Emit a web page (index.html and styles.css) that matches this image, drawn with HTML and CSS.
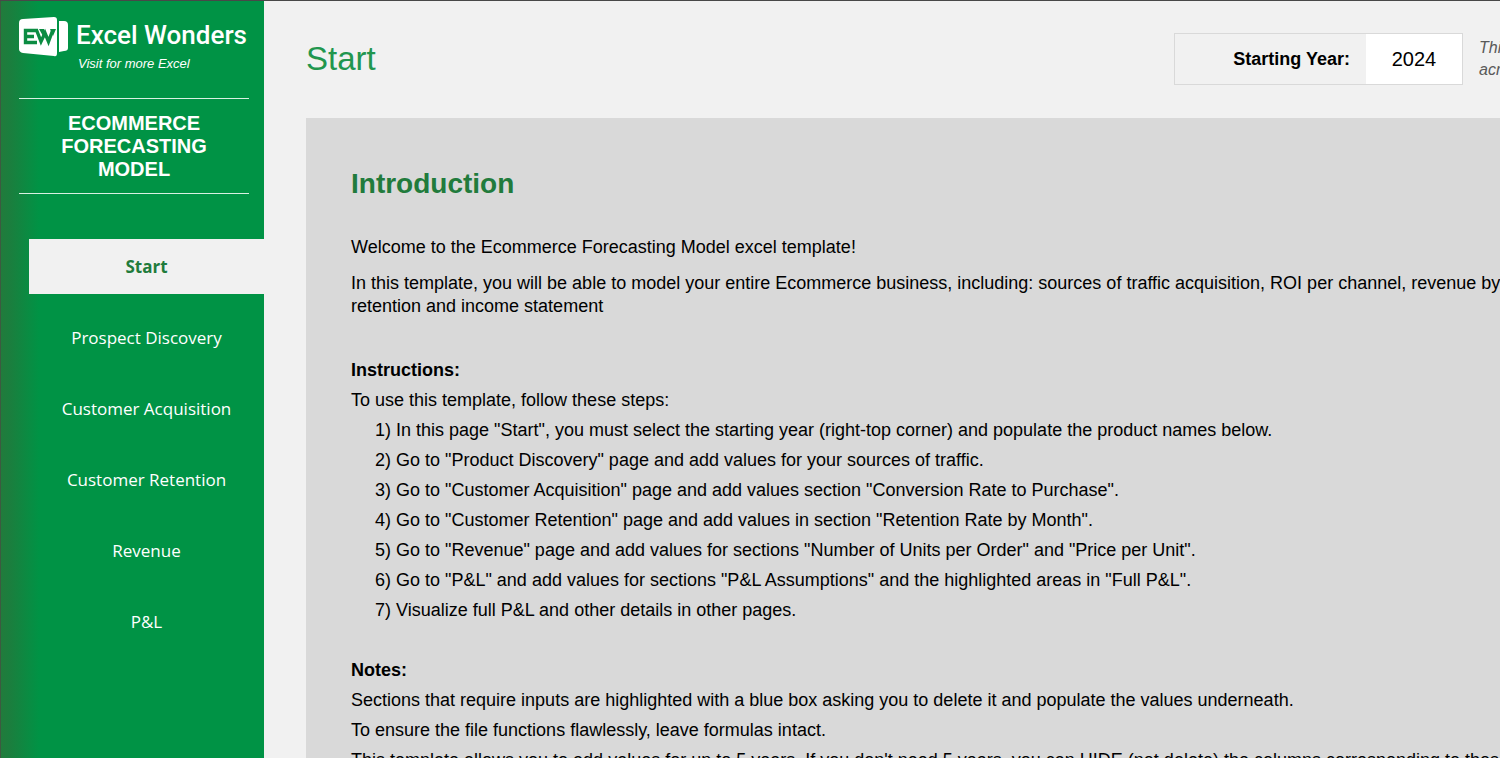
FILE: index.html
```html
<!DOCTYPE html>
<html lang="en">
<head>
    <meta charset="UTF-8">
    <meta name="viewport" content="width=device-width, initial-scale=1.0">
    <title>Ecommerce Forecasting Model - Excel Wonders</title>
    <link rel="stylesheet" href="styles.css">
</head>
<body>
    <div class="workbook">
        <aside class="sidebar">
            <a href="#" class="brand">
                <svg class="brand-logo" viewBox="0 0 50 42" aria-hidden="true">
                    <path fill="#fff" d="M4 3 35 1Q38 1 38 4V37Q38 41 35 40L4 37Q0 36 0 33V7Q0 3 4 3Z"/>
                    <path fill="#fff" d="M40 5H45Q49 5 49 9V32Q49 35 45 35L40 36Z"/>
                    <path fill="none" stroke="#0b8c42" stroke-width="3.4" d="M19 14.5H6.5V26.5H18M7 20.5H15M17.5 14 22 25.500 26 17 29.500 25.500 34 13.500"/>
                    <path fill="#0b8c42" d="M20 13H25L27 18 24 20ZM31 13H37L34 20Z"/>
                </svg>
                <span class="brand-text">
                    <span class="brand-name">Excel Wonders</span>
                    <span class="brand-tagline">Visit for more Excel</span>
                </span>
            </a>
            <h2 class="model-title">ECOMMERCE FORECASTING MODEL</h2>
            <nav class="menu">
                <a href="#start" class="menu-link active">Start</a>
                <a href="#prospect" class="menu-link">Prospect Discovery</a>
                <a href="#acquisition" class="menu-link">Customer Acquisition</a>
                <a href="#retention" class="menu-link">Customer Retention</a>
                <a href="#revenue" class="menu-link">Revenue</a>
                <a href="#pl" class="menu-link">P&amp;L</a>
            </nav>
        </aside>

        <main class="content" id="start">
            <header class="page-header">
                <h1>Start</h1>
                <div class="year-box">
                    <label for="starting-year">Starting Year:</label>
                    <input type="text" id="starting-year" value="2024">
                </div>
                <p class="year-note">This<br>across</p>
            </header>

            <section class="panel">
                <h2>Introduction</h2>
                <p class="welcome">Welcome to the Ecommerce Forecasting Model excel template!</p>
                <p class="summary">In this template, you will be able to model your entire Ecommerce business, including: sources of traffic acquisition, ROI per channel, revenue by<br>retention and income statement</p>

                <h3>Instructions:</h3>
                <p>To use this template, follow these steps:</p>
                <ol class="steps">
                    <li>In this page "Start", you must select the starting year (right-top corner) and populate the product names below.</li>
                    <li>Go to "Product Discovery" page and add values for your sources of traffic.</li>
                    <li>Go to "Customer Acquisition" page and add values section "Conversion Rate to Purchase".</li>
                    <li>Go to "Customer Retention" page and add values in section "Retention Rate by Month".</li>
                    <li>Go to "Revenue" page and add values for sections "Number of Units per Order" and "Price per Unit".</li>
                    <li>Go to "P&amp;L" and add values for sections "P&amp;L Assumptions" and the highlighted areas in "Full P&amp;L".</li>
                    <li>Visualize full P&amp;L and other details in other pages.</li>
                </ol>

                <h3>Notes:</h3>
                <p>Sections that require inputs are highlighted with a blue box asking you to delete it and populate the values underneath.</p>
                <p>To ensure the file functions flawlessly, leave formulas intact.</p>
                <p>This template allows you to add values for up to 5 years. If you don't need 5 years, you can HIDE (not delete) the columns corresponding to those</p>
            </section>
        </main>
    </div>
</body>
</html>
```
FILE: styles.css
```css
* {
    box-sizing: border-box;
}
body {
    margin: 0;
    font-family: "Liberation Sans", Arial, sans-serif;
    font-size: 18px;
    line-height: 30px;
    color: #000;
    background-color: #f1f1f1;
}
h1, h2, h3, p, ol {
    margin: 0;
}
a {
    color: #fff;
    text-decoration: none;
}
.workbook {
    display: flex;
    height: 100vh;
    overflow: hidden;
    border-top: 1px solid #484848;
}

/* sidebar */
.sidebar {
    flex: 0 0 264px;
    border-left: 1px solid #3c5a40;
    background: linear-gradient(to right, #217b3c 0, #1a7f3e 10px, #009345 38px);
}
.brand {
    display: flex;
    gap: 7px;
    height: 98px;
    margin: 0 15px 0 18px;
    padding-top: 15px;
    border-bottom: 1px solid #d9f0e2;
}
.brand-logo {
    flex: none;
    width: 50px;
    height: 42px;
}
.brand-text {
    display: flex;
    flex-direction: column;
    white-space: nowrap;
}
.brand-name {
    font-family: Roboto, sans-serif;
    font-size: 26px;
    font-weight: 500;
    line-height: 38px;
}
.brand-tagline {
    padding-left: 2px;
    font-size: 13px;
    font-style: italic;
    line-height: 20px;
}
.model-title {
    margin: 0 15px 45px 18px;
    padding: 13px 40px 12px;
    border-bottom: 1px solid #d9f0e2;
    color: #fff;
    font-size: 20px;
    line-height: 23px;
    text-align: center;
}
.menu {
    display: flex;
    flex-direction: column;
    gap: 16px;
    margin-left: 28px;
}
.menu-link {
    font-family: "Open Sans", sans-serif;
    font-size: 17px;
    font-weight: 500;
    line-height: 55px;
    text-align: center;
}
.menu-link.active {
    color: #217b3c;
    background-color: #f1f1f1;
    font-weight: bold;
}

/* content */
.content {
    flex: 1;
    min-width: 0;
    padding-left: 42px;
    white-space: nowrap;
}
.page-header {
    display: flex;
    align-items: center;
    height: 117px;
    padding-bottom: 1px;
}
.page-header h1 {
    flex: 1;
    color: #21964e;
    font-size: 33px;
    font-weight: normal;
    line-height: 40px;
}
.year-box {
    display: flex;
    width: 289px;
    height: 52px;
    border: 1px solid #d9d9d9;
}
.year-box label {
    flex: 1;
    padding-right: 16px;
    font-weight: bold;
    line-height: 50px;
    text-align: right;
}
.year-box input {
    width: 96px;
    padding: 0;
    border: none;
    background-color: #fff;
    color: #000;
    font-family: inherit;
    font-size: 20px;
    text-align: center;
}
.year-note {
    width: 37px;
    padding-left: 16px;
    overflow: hidden;
    color: #595959;
    font-size: 16px;
    font-style: italic;
    line-height: 22px;
}
.panel {
    padding: 46px 45px;
    background-color: #d9d9d9;
}
.panel h2 {
    margin-bottom: 32px;
    color: #217b3c;
    font-size: 28px;
    line-height: 40px;
}
.panel h3 {
    margin-top: 36px;
    font-size: 18px;
}
.welcome {
    line-height: 23px;
}
.panel .summary {
    margin: 13px 0 37px;
    line-height: 23px;
}
.steps {
    padding-left: 24px;
    list-style: none;
    counter-reset: step;
}
.steps li {
    counter-increment: step;
}
.steps li::before {
    content: counter(step) ") ";
}
.steps + h3 {
    margin-top: 30px;
}
```
